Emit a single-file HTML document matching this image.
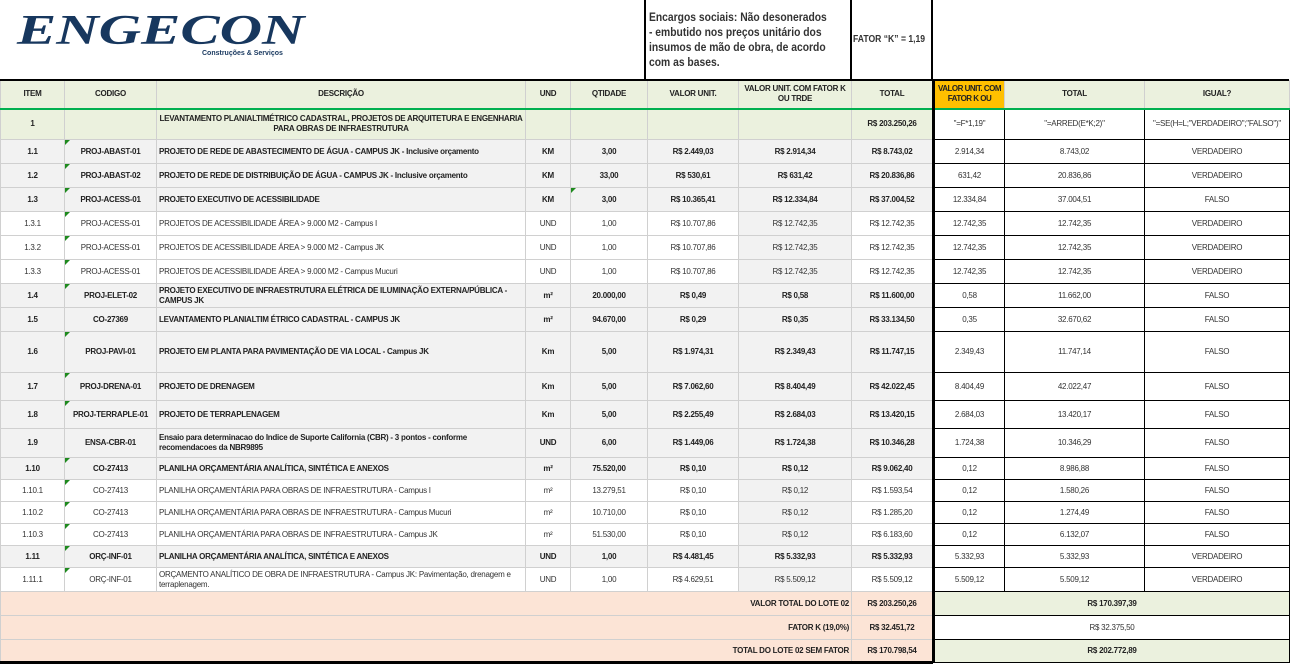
<!DOCTYPE html>
<html><head><meta charset="utf-8">
<style>
*{margin:0;padding:0;box-sizing:border-box}
body{width:1291px;height:665px;background:#fff;position:relative;overflow:hidden;font-family:"Liberation Sans",sans-serif;color:#222}
.logo{position:absolute;left:17px;top:6px;font-family:"Liberation Serif",serif;font-weight:bold;font-style:italic;font-size:42px;line-height:50px;color:#17375e;transform:scaleX(1.4);transform-origin:left;white-space:nowrap}
.sub{position:absolute;left:202px;top:50px;font-family:"Liberation Sans",sans-serif;font-weight:bold;font-size:7px;color:#17375e;white-space:nowrap}
.box1{position:absolute;left:644px;top:0;width:208px;height:81px;border-left:2px solid #000;border-right:2px solid #000;font-family:"Liberation Sans",sans-serif;font-size:12px;font-weight:bold;color:#333;padding:10px 0 0 3px;line-height:15px;white-space:nowrap}
.box1 span{display:block;transform:scaleX(0.86);transform-origin:left}
.box2{position:absolute;left:851px;top:0;width:82px;height:81px;border-right:2px solid #000;font-size:10px;font-weight:bold;color:#333;padding-top:34px;padding-left:2px;white-space:nowrap}
.box2 span{display:block;transform:scaleX(0.86);transform-origin:left}
table{position:absolute;left:0;top:80px;border-collapse:collapse;table-layout:fixed;width:1289px}
td{border:1px solid #d0d0d0;font-size:8px;text-align:center;vertical-align:middle;overflow:hidden;line-height:10px;color:#333;letter-spacing:-0.25px}
td.d{text-align:left;padding-left:2px}
tr.h td{background:#ebf1de;font-weight:bold;color:#222;border-bottom:2px solid #00b050}
tr.b td{background:#f2f2f2;font-weight:bold;color:#222}
tr.n td.k{background:#f2f2f2}
tr.g td{background:#ebf1de;font-weight:bold;color:#222}
td.r{background:#fff!important;border:1px solid #000;font-weight:normal!important;color:#333!important}
td.bl{border-left:3px solid #000}
tr.h td.o{background:#ffc000;letter-spacing:-0.5px}
tr.s td{background:#fce4d6;font-weight:bold;color:#222;border-color:#d0d0d0}
tr.s td.rg{background:#ebf1de;border:1px solid #000;border-left:3px solid #000}
tr.s td.rw{background:#fff;border:1px solid #000;border-left:3px solid #000;font-weight:normal;color:#333}
td.t{position:relative}
td.t::before{content:"";position:absolute;left:0;top:0;border-top:5px solid #1e8a1e;border-right:5px solid transparent}
.topline{position:absolute;left:0;top:79px;width:1289px;height:2px;background:#000}
.botline{position:absolute;left:0;top:661px;width:933px;height:3px;background:#000}
</style></head><body>
<div class="logo">ENGECON</div>
<div class="sub">Construções &amp; Serviços</div>
<div class="box1"><span>Encargos sociais: Não desonerados</span><span>- embutido nos preços unitário dos</span><span>insumos de mão de obra, de acordo</span><span>com as bases.</span></div>
<div class="box2"><span>FATOR “K” = 1,19</span></div>
<table>
<colgroup><col style="width:64px"><col style="width:92px"><col style="width:369px"><col style="width:45px"><col style="width:77px"><col style="width:91px"><col style="width:113px"><col style="width:82px"><col style="width:71px"><col style="width:140px"><col style="width:145px"></colgroup>
<tr class="h" style="height:28px"><td>ITEM</td><td>CODIGO</td><td>DESCRIÇÃO</td><td>UND</td><td>QTIDADE</td><td>VALOR UNIT.</td><td>VALOR UNIT. COM FATOR K OU TRDE</td><td>TOTAL</td><td class="o bl">VALOR UNIT. COM FATOR K OU</td><td>TOTAL</td><td>IGUAL?</td></tr>
<tr class="g" style="height:31px"><td>1</td><td></td><td>LEVANTAMENTO PLANIALTIMÉTRICO CADASTRAL, PROJETOS DE ARQUITETURA E ENGENHARIA PARA OBRAS DE INFRAESTRUTURA</td><td></td><td></td><td></td><td></td><td>R$ 203.250,26</td><td class="r bl">"=F*1,19"</td><td class="r">"=ARRED(E*K;2)"</td><td class="r">"=SE(H=L;"VERDADEIRO";"FALSO")"</td></tr>
<tr class="b" style="height:24px"><td>1.1</td><td class="t">PROJ-ABAST-01</td><td class="d">PROJETO DE REDE DE ABASTECIMENTO DE ÁGUA - CAMPUS JK - Inclusive orçamento</td><td>KM</td><td>3,00</td><td>R$ 2.449,03</td><td>R$ 2.914,34</td><td>R$ 8.743,02</td><td class="r bl">2.914,34</td><td class="r">8.743,02</td><td class="r">VERDADEIRO</td></tr>
<tr class="b" style="height:24px"><td>1.2</td><td class="t">PROJ-ABAST-02</td><td class="d">PROJETO DE REDE DE DISTRIBUIÇÃO DE ÁGUA - CAMPUS JK - Inclusive orçamento</td><td>KM</td><td>33,00</td><td>R$ 530,61</td><td>R$ 631,42</td><td>R$ 20.836,86</td><td class="r bl">631,42</td><td class="r">20.836,86</td><td class="r">VERDADEIRO</td></tr>
<tr class="b" style="height:24px"><td>1.3</td><td class="t">PROJ-ACESS-01</td><td class="d">PROJETO EXECUTIVO DE ACESSIBILIDADE</td><td>KM</td><td class="t">3,00</td><td>R$ 10.365,41</td><td>R$ 12.334,84</td><td>R$ 37.004,52</td><td class="r bl">12.334,84</td><td class="r">37.004,51</td><td class="r">FALSO</td></tr>
<tr class="n" style="height:24px"><td>1.3.1</td><td class="t">PROJ-ACESS-01</td><td class="d">PROJETOS DE ACESSIBILIDADE ÁREA &gt; 9.000 M2 - Campus I</td><td>UND</td><td>1,00</td><td>R$ 10.707,86</td><td class="k">R$ 12.742,35</td><td>R$ 12.742,35</td><td class="r bl">12.742,35</td><td class="r">12.742,35</td><td class="r">VERDADEIRO</td></tr>
<tr class="n" style="height:24px"><td>1.3.2</td><td class="t">PROJ-ACESS-01</td><td class="d">PROJETOS DE ACESSIBILIDADE ÁREA &gt; 9.000 M2 - Campus JK</td><td>UND</td><td>1,00</td><td>R$ 10.707,86</td><td class="k">R$ 12.742,35</td><td>R$ 12.742,35</td><td class="r bl">12.742,35</td><td class="r">12.742,35</td><td class="r">VERDADEIRO</td></tr>
<tr class="n" style="height:24px"><td>1.3.3</td><td class="t">PROJ-ACESS-01</td><td class="d">PROJETOS DE ACESSIBILIDADE ÁREA &gt; 9.000 M2 - Campus Mucuri</td><td>UND</td><td>1,00</td><td>R$ 10.707,86</td><td class="k">R$ 12.742,35</td><td>R$ 12.742,35</td><td class="r bl">12.742,35</td><td class="r">12.742,35</td><td class="r">VERDADEIRO</td></tr>
<tr class="b" style="height:24px"><td>1.4</td><td class="t">PROJ-ELET-02</td><td class="d">PROJETO EXECUTIVO DE INFRAESTRUTURA ELÉTRICA DE ILUMINAÇÃO EXTERNA/PÚBLICA - CAMPUS JK</td><td>m²</td><td>20.000,00</td><td>R$ 0,49</td><td>R$ 0,58</td><td>R$ 11.600,00</td><td class="r bl">0,58</td><td class="r">11.662,00</td><td class="r">FALSO</td></tr>
<tr class="b" style="height:24px"><td>1.5</td><td>CO-27369</td><td class="d">LEVANTAMENTO PLANIALTIM ÉTRICO CADASTRAL - CAMPUS JK</td><td>m²</td><td>94.670,00</td><td>R$ 0,29</td><td>R$ 0,35</td><td>R$ 33.134,50</td><td class="r bl">0,35</td><td class="r">32.670,62</td><td class="r">FALSO</td></tr>
<tr class="b" style="height:41px"><td>1.6</td><td class="t">PROJ-PAVI-01</td><td class="d">PROJETO EM PLANTA PARA PAVIMENTAÇÃO DE VIA LOCAL - Campus JK</td><td>Km</td><td>5,00</td><td>R$ 1.974,31</td><td>R$ 2.349,43</td><td>R$ 11.747,15</td><td class="r bl">2.349,43</td><td class="r">11.747,14</td><td class="r">FALSO</td></tr>
<tr class="b" style="height:28px"><td>1.7</td><td class="t">PROJ-DRENA-01</td><td class="d">PROJETO DE DRENAGEM</td><td>Km</td><td>5,00</td><td>R$ 7.062,60</td><td>R$ 8.404,49</td><td>R$ 42.022,45</td><td class="r bl">8.404,49</td><td class="r">42.022,47</td><td class="r">FALSO</td></tr>
<tr class="b" style="height:28px"><td>1.8</td><td class="t">PROJ-TERRAPLE-01</td><td class="d">PROJETO DE TERRAPLENAGEM</td><td>Km</td><td>5,00</td><td>R$ 2.255,49</td><td>R$ 2.684,03</td><td>R$ 13.420,15</td><td class="r bl">2.684,03</td><td class="r">13.420,17</td><td class="r">FALSO</td></tr>
<tr class="b" style="height:29px"><td>1.9</td><td>ENSA-CBR-01</td><td class="d">Ensaio para determinacao do Indice de Suporte California (CBR) - 3 pontos - conforme recomendacoes da NBR9895</td><td>UND</td><td>6,00</td><td>R$ 1.449,06</td><td>R$ 1.724,38</td><td>R$ 10.346,28</td><td class="r bl">1.724,38</td><td class="r">10.346,29</td><td class="r">FALSO</td></tr>
<tr class="b" style="height:22px"><td>1.10</td><td class="t">CO-27413</td><td class="d">PLANILHA ORÇAMENTÁRIA ANALÍTICA, SINTÉTICA E ANEXOS</td><td>m²</td><td>75.520,00</td><td>R$ 0,10</td><td>R$ 0,12</td><td>R$ 9.062,40</td><td class="r bl">0,12</td><td class="r">8.986,88</td><td class="r">FALSO</td></tr>
<tr class="n" style="height:22px"><td>1.10.1</td><td class="t">CO-27413</td><td class="d">PLANILHA ORÇAMENTÁRIA PARA OBRAS DE INFRAESTRUTURA - Campus I</td><td>m²</td><td>13.279,51</td><td>R$ 0,10</td><td class="k">R$ 0,12</td><td>R$ 1.593,54</td><td class="r bl">0,12</td><td class="r">1.580,26</td><td class="r">FALSO</td></tr>
<tr class="n" style="height:22px"><td>1.10.2</td><td class="t">CO-27413</td><td class="d">PLANILHA ORÇAMENTÁRIA PARA OBRAS DE INFRAESTRUTURA - Campus Mucuri</td><td>m²</td><td>10.710,00</td><td>R$ 0,10</td><td class="k">R$ 0,12</td><td>R$ 1.285,20</td><td class="r bl">0,12</td><td class="r">1.274,49</td><td class="r">FALSO</td></tr>
<tr class="n" style="height:22px"><td>1.10.3</td><td class="t">CO-27413</td><td class="d">PLANILHA ORÇAMENTÁRIA PARA OBRAS DE INFRAESTRUTURA - Campus JK</td><td>m²</td><td>51.530,00</td><td>R$ 0,10</td><td class="k">R$ 0,12</td><td>R$ 6.183,60</td><td class="r bl">0,12</td><td class="r">6.132,07</td><td class="r">FALSO</td></tr>
<tr class="b" style="height:22px"><td>1.11</td><td class="t">ORÇ-INF-01</td><td class="d">PLANILHA ORÇAMENTÁRIA ANALÍTICA, SINTÉTICA E ANEXOS</td><td>UND</td><td>1,00</td><td>R$ 4.481,45</td><td>R$ 5.332,93</td><td>R$ 5.332,93</td><td class="r bl">5.332,93</td><td class="r">5.332,93</td><td class="r">VERDADEIRO</td></tr>
<tr class="n" style="height:24px"><td>1.11.1</td><td class="t">ORÇ-INF-01</td><td class="d">ORÇAMENTO ANALÍTICO DE OBRA DE INFRAESTRUTURA - Campus JK: Pavimentação, drenagem e terraplenagem.</td><td>UND</td><td>1,00</td><td>R$ 4.629,51</td><td class="k">R$ 5.509,12</td><td>R$ 5.509,12</td><td class="r bl">5.509,12</td><td class="r">5.509,12</td><td class="r">VERDADEIRO</td></tr>
<tr class="s" style="height:24px"><td colspan="7" style="text-align:right;padding-right:2px">VALOR TOTAL DO LOTE 02</td><td>R$ 203.250,26</td><td colspan="3" class="rg">R$ 170.397,39</td></tr>
<tr class="s" style="height:24px"><td colspan="7" style="text-align:right;padding-right:2px">FATOR K (19,0%)</td><td>R$ 32.451,72</td><td colspan="3" class="rw">R$ 32.375,50</td></tr>
<tr class="s" style="height:23px"><td colspan="7" style="text-align:right;padding-right:2px">TOTAL DO LOTE 02 SEM FATOR</td><td>R$ 170.798,54</td><td colspan="3" class="rg">R$ 202.772,89</td></tr>
</table>
<div class="topline"></div>
<div class="botline"></div>
</body></html>
